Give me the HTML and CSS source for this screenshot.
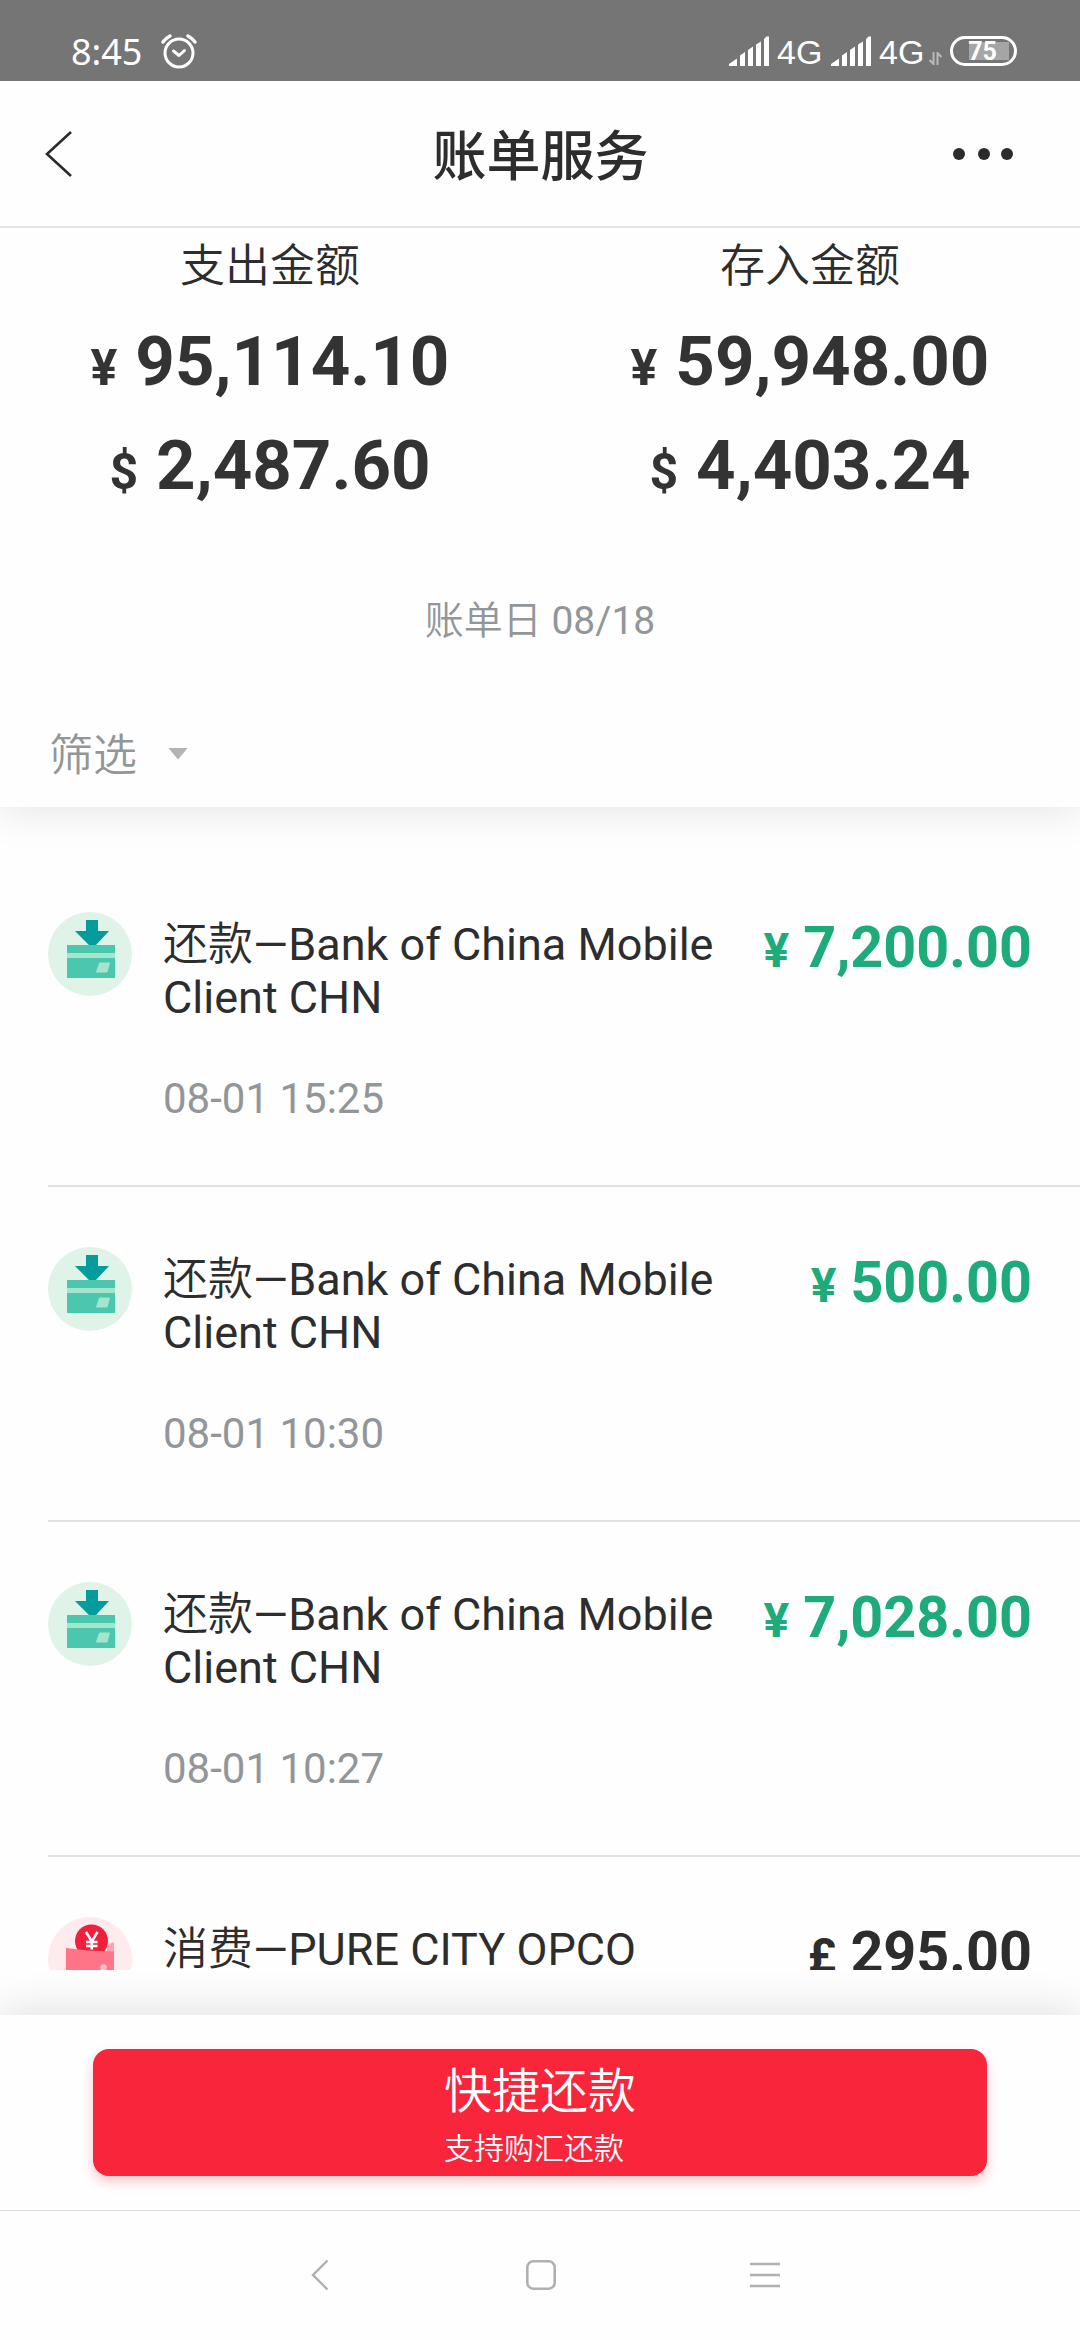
FILE: index.html
```html
<!DOCTYPE html>
<html lang="zh-CN">
<head>
<meta charset="utf-8">
<title>账单服务</title>
<link rel="stylesheet" href="styles.css">
</head>
<body>
<svg class="defs" aria-hidden="true">
  <symbol id="signal" viewBox="0 0 42 30">
    <path d="M1 30V28L9 22.5V30ZM12 30V19.5L17 16V30ZM20 30V14L25 10.5V30ZM28 30V8.500L33 5.500V30ZM36 30V3L38.500 0.500H41V30Z" fill="#fff"/>
  </symbol>
  <symbol id="repay" viewBox="0 0 84 84">
    <circle cx="42" cy="42" r="42" fill="#dff3e8"/>
    <rect x="19" y="33" width="48" height="33" fill="#4ac7ae"/>
    <rect x="19" y="41" width="48" height="5" fill="#a5e5cb"/>
    <path d="M51.500 51H61.500L59 60H48.500Z" fill="#a5e5cb" stroke="#a5e5cb" stroke-linejoin="round"/>
    <path d="M38 8H50V19H61L48 33H41L27 19H38Z" fill="#039b9b"/>
  </symbol>
</svg>
<div class="screen">
  <header class="status">
    <div class="status-left">
      <span class="clock">8:45</span>
      <svg class="alarm" width="38" height="38" viewBox="0 0 38 38" fill="none" stroke="#fff" stroke-linecap="round" stroke-linejoin="round">
        <circle cx="19" cy="20" r="14" stroke-width="3"/>
        <path d="M13.500 18L19 22.500L24.500 17.500" stroke-width="3"/>
        <path d="M3 9Q6 5 10 3M35 9Q32 5 28 3" stroke-width="3.500"/>
      </svg>
    </div>
    <div class="status-right">
      <svg class="bars" width="42" height="30"><use href="#signal"/></svg>
      <span class="net">4G</span>
      <svg class="bars" width="42" height="30"><use href="#signal"/></svg>
      <span class="net">4G</span>
      <svg class="data" width="13" height="13" viewBox="0 0 13 13" fill="none" stroke="#b9b9b9" stroke-width="2"><path d="M4.500 0V12L0.500 8M8.500 13V1L12.500 5"/></svg>
      <span class="battery">75</span>
    </div>
  </header>

  <nav class="titlebar">
    <svg class="back" width="30" height="48" viewBox="0 0 30 48" fill="none" stroke="#2b2b2b" stroke-width="2.600"><path d="M27 2L3 24L27 46"/></svg>
    <h1>账单服务</h1>
    <svg class="more" width="56" height="14" viewBox="0 0 56 14" fill="#2b2b2b"><circle cx="7" cy="7" r="6"/><circle cx="32" cy="7" r="6"/><circle cx="55" cy="7" r="6"/></svg>
  </nav>

  <section class="summary">
    <div class="totals">
      <div class="total">
        <div class="label">支出金额</div>
        <div class="sum"><span class="cur">¥</span>95,114.10</div>
        <div class="sum"><span class="cur">$</span>2,487.60</div>
      </div>
      <div class="total">
        <div class="label">存入金额</div>
        <div class="sum"><span class="cur">¥</span>59,948.00</div>
        <div class="sum"><span class="cur">$</span>4,403.24</div>
      </div>
    </div>
    <div class="billday"><span class="cjk">账单日</span> 08/18</div>
    <div class="filter"><span class="cjk">筛选</span><i class="caret"></i></div>
  </section>

  <main class="list">
    <article class="row">
      <svg class="icon" width="84" height="84"><use href="#repay"/></svg>
      <div class="info"><div class="name"><span class="cjk">还款</span>—Bank of China Mobile Client CHN</div><div class="time">08-01 15:25</div></div>
      <div class="amount in"><span class="sign">¥</span>7,200.00</div>
    </article>
    <article class="row">
      <svg class="icon" width="84" height="84"><use href="#repay"/></svg>
      <div class="info"><div class="name"><span class="cjk">还款</span>—Bank of China Mobile Client CHN</div><div class="time">08-01 10:30</div></div>
      <div class="amount in"><span class="sign">¥</span>500.00</div>
    </article>
    <article class="row">
      <svg class="icon" width="84" height="84"><use href="#repay"/></svg>
      <div class="info"><div class="name"><span class="cjk">还款</span>—Bank of China Mobile Client CHN</div><div class="time">08-01 10:27</div></div>
      <div class="amount in"><span class="sign">¥</span>7,028.00</div>
    </article>
    <article class="row">
      <svg class="icon" width="84" height="84" viewBox="0 0 84 84">
        <circle cx="42" cy="42" r="42" fill="#fdebed"/>
        <path d="M59 28L66 25V36H59Z" fill="#ffa3b0"/>
        <circle cx="43.500" cy="24" r="16.500" fill="#f0203c"/>
        <path d="M38 15L43.800 24.500L49.500 15M43.800 24.500V32.500M38 25H49.500M38 29H49.500" stroke="#fff" stroke-width="2.500" fill="none"/>
        <path d="M18 31L40 33.500L66 34.500V68H18Z" fill="#ff7486"/>
        <circle cx="55.500" cy="50.500" r="3.300" fill="#ffc1c9"/>
      </svg>
      <div class="info"><div class="name"><span class="cjk">消费</span>—PURE CITY OPCO</div></div>
      <div class="amount"><span class="sign">£</span>295.00</div>
    </article>
  </main>

  <footer class="actions">
    <button class="pay"><span class="pay-text"><span class="pay-main">快捷还款</span><span class="pay-sub">支持购汇还款</span></span></button>
  </footer>

  <div class="sysnav">
    <svg width="18" height="32" viewBox="0 0 18 32" fill="none" stroke="#b0b0b0" stroke-width="2.400"><path d="M16.500 1.500L2 16L16.500 30.500"/></svg>
    <svg width="32" height="32" viewBox="0 0 32 32" fill="none" stroke="#b0b0b0" stroke-width="2.600"><rect x="2.300" y="2.300" width="27.400" height="27.400" rx="6"/></svg>
    <svg width="30" height="32" viewBox="0 0 30 32" stroke="#b0b0b0" stroke-width="2.600"><path d="M0 5H30M0 16H30M0 27H30"/></svg>
  </div>
</div>
</body>
</html>
```

FILE: styles.css
```css
* { box-sizing: border-box; }
body { margin: 0; background: #fefefe; }
.defs { display: none; }
.screen {
  width: 1080px;
  height: 2340px;
  display: flex;
  flex-direction: column;
  overflow: hidden;
  background: #fefefe;
  color: #2d2d2d;
  font-family: Roboto, "Noto Sans CJK SC", sans-serif;
}
.cjk { font-weight: 350; }

.status {
  flex: none;
  height: 81px;
  padding: 22px 63px 0 71px;
  display: flex;
  justify-content: space-between;
  background: #757575;
  color: #fff;
  font-family: "Noto Sans", sans-serif;
}
.status-left, .status-right { display: flex; align-items: center; height: 60px; }
.clock { font-size: 36px; line-height: 60px; }
.alarm { margin: 0 0 1px 18px; }
.bars { margin-top: -3px; }
.net { width: 60px; padding-left: 7px; font: 34px/60px "Liberation Sans", sans-serif; }
.status-right .data { margin: 12px 0 0 -3px; }
.battery {
  width: 67px;
  height: 30px;
  margin: -3px 0 0 8px;
  padding-right: 2px;
  border: 3px solid #fff;
  border-radius: 15px;
  background: linear-gradient(#a5a5a5, #a5a5a5) 16px 3px / 40px 18px no-repeat;
  font: 700 25px/25px Roboto, sans-serif;
  text-align: center;
}

.titlebar {
  flex: none;
  height: 147px;
  padding: 0 67px 0 44px;
  display: grid;
  grid-template-columns: 1fr auto 1fr;
  align-items: center;
  border-bottom: 2px solid #e5e5e5;
}
.titlebar h1 { margin: 8px 0 0 24px; font-size: 54px; line-height: 80px; font-weight: 500; }
.more { justify-self: end; overflow: visible; margin-right: 5px; }

.summary {
  flex: none;
  position: relative;
  height: 579px;
  background: #fefefe;
  box-shadow: 0 4px 40px rgba(0, 0, 0, 0.1);
  clip-path: inset(0 0 -60px 0);
}
.totals { display: grid; grid-template-columns: 1fr 1fr; text-align: center; padding-top: 8px; }
.label { font-size: 45px; line-height: 62px; font-weight: 350; color: #2d2d2d; }
.sum { height: 104px; font-size: 69px; line-height: 128px; font-weight: 700; color: #333; white-space: nowrap; }
.cur { font-size: 50px; margin-right: 18px; }
.billday { margin-top: 85px; font-size: 39px; line-height: 60px; text-align: center; color: #929699; }
.filter { height: 66px; margin-top: 72px; padding-left: 49px; display: flex; align-items: center; font-size: 44px; line-height: 66px; color: #929699; }
.caret { width: 20px; height: 12px; margin: -5px 0 0 31px; background: #b3b3b3; clip-path: polygon(0 0, 100% 0, 50% 100%); }

.list { flex: none; height: 1163px; padding: 45px 0 0 48px; overflow: hidden; }
.row { height: 335px; display: flex; align-items: flex-start; padding: 60px 48px 0 0; border-bottom: 2px solid #e1e1e1; }
.icon { flex: none; }
.info { width: 580px; margin-left: 31px; padding-top: 6px; }
.name { font-size: 45px; line-height: 53px; }
.time { margin-top: 50px; font-size: 42px; line-height: 50px; color: #929699; }
.amount { margin-left: auto; padding-top: 1px; font-size: 57.5px; line-height: 70px; font-weight: 700; white-space: nowrap; }
.sign { font-size: 48px; margin-right: 14px; }
.in { color: #1dab7a; }

.actions {
  flex: none;
  position: relative;
  height: 196px;
  margin-top: 45px;
  padding: 34px 93px 0;
  background: #fefefe;
  border-bottom: 1px solid #dcdcdc;
  box-shadow: 0 -4px 40px rgba(0, 0, 0, 0.12);
  clip-path: inset(-60px 0 0 0);
}
.pay {
  width: 894px;
  height: 127px;
  display: flex;
  align-items: flex-start;
  justify-content: center;
  padding: 0;
  border: 0;
  border-radius: 16px;
  background: #f9253a;
  box-shadow: 0 6px 12px rgba(250, 36, 56, 0.25);
  color: #fff;
  font-family: inherit;
  font-weight: 350;
}
.pay-text { display: flex; flex-direction: column; text-align: left; white-space: nowrap; }
.pay-main { margin-top: 8px; font-size: 48px; line-height: 70px; }
.pay-sub { font-size: 30px; line-height: 44px; }

.sysnav { flex: none; height: 127px; display: flex; align-items: center; padding-left: 311px; }
.sysnav svg + svg { margin-left: 196px; }
.sysnav svg + svg + svg { margin-left: 193px; }
```
